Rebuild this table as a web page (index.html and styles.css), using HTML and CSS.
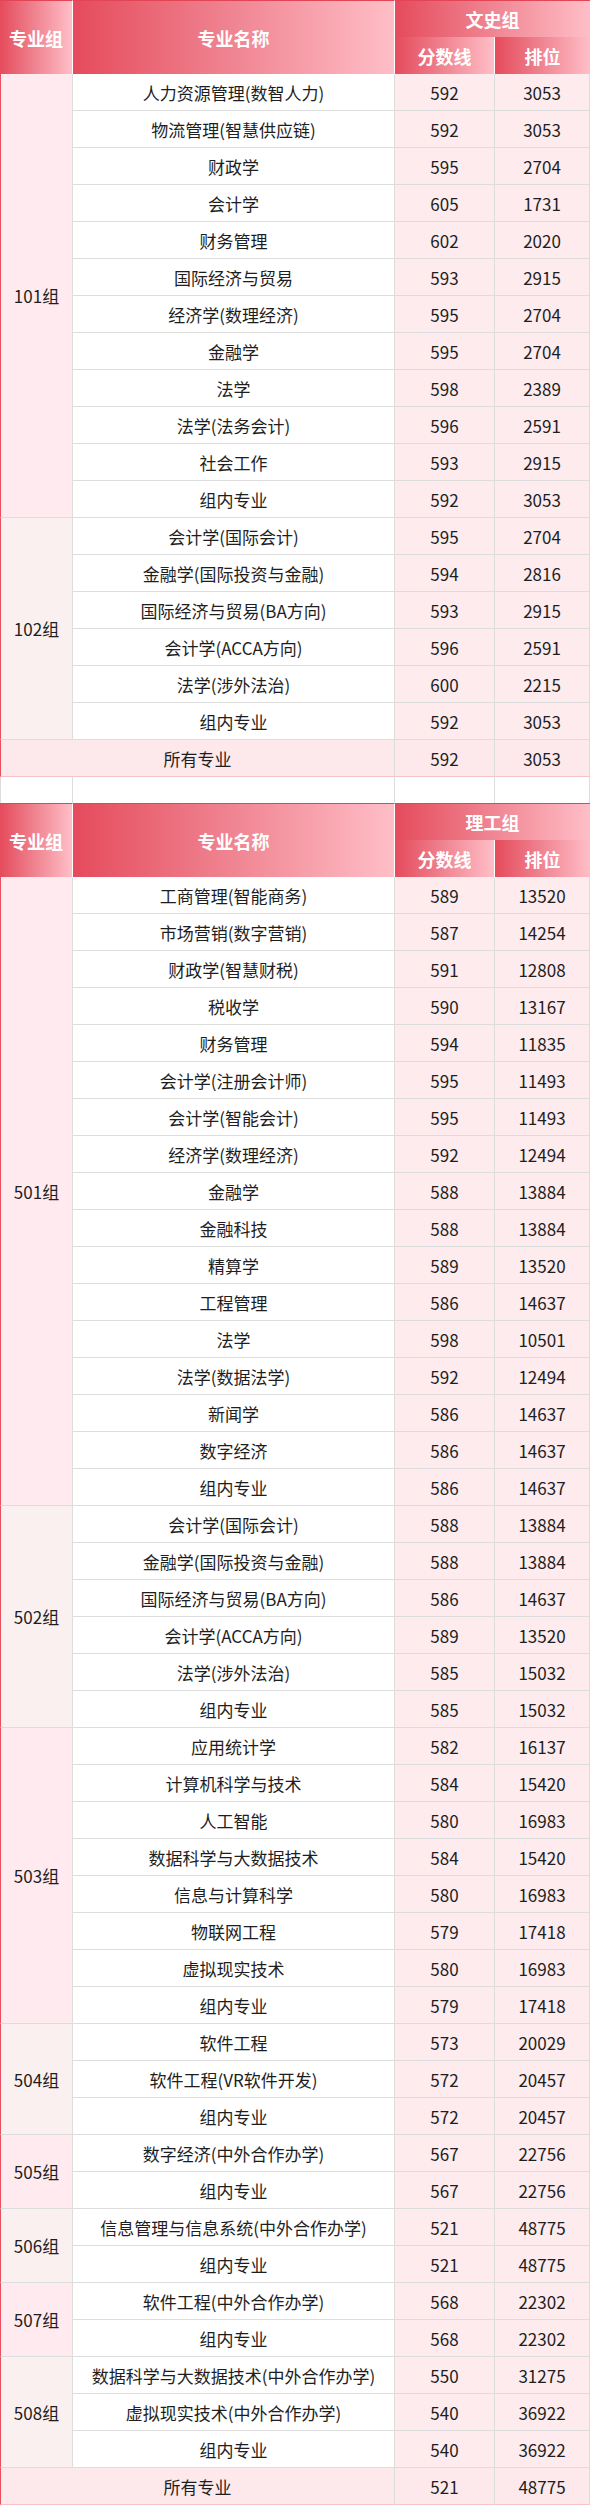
FILE: index.html
```html
<!DOCTYPE html>
<html lang="zh-CN">
<head>
<meta charset="utf-8">
<title>录取分数线</title>
<link rel="stylesheet" href="styles.css">
</head>
<body>
<table class="score-table">
  <colgroup>
    <col class="c-group">
    <col class="c-name">
    <col class="c-score">
    <col class="c-rank">
  </colgroup>
  <tbody>
    <tr class="head-row">
      <th rowspan="2" class="h-group">专业组</th>
      <th rowspan="2" class="h-name">专业名称</th>
      <th colspan="2" class="h-cat">文史组</th>
    </tr>
    <tr class="head-row">
      <th class="h-score">分数线</th>
      <th class="h-rank">排位</th>
    </tr>

    <tr><td rowspan="12" class="grp odd">101组</td><td class="name">人力资源管理(数智人力)</td><td class="num">592</td><td class="num rk">3053</td></tr>
    <tr><td class="name">物流管理(智慧供应链)</td><td class="num">592</td><td class="num rk">3053</td></tr>
    <tr><td class="name">财政学</td><td class="num">595</td><td class="num rk">2704</td></tr>
    <tr><td class="name">会计学</td><td class="num">605</td><td class="num rk">1731</td></tr>
    <tr><td class="name">财务管理</td><td class="num">602</td><td class="num rk">2020</td></tr>
    <tr><td class="name">国际经济与贸易</td><td class="num">593</td><td class="num rk">2915</td></tr>
    <tr><td class="name">经济学(数理经济)</td><td class="num">595</td><td class="num rk">2704</td></tr>
    <tr><td class="name">金融学</td><td class="num">595</td><td class="num rk">2704</td></tr>
    <tr><td class="name">法学</td><td class="num">598</td><td class="num rk">2389</td></tr>
    <tr><td class="name">法学(法务会计)</td><td class="num">596</td><td class="num rk">2591</td></tr>
    <tr><td class="name">社会工作</td><td class="num">593</td><td class="num rk">2915</td></tr>
    <tr><td class="name">组内专业</td><td class="num">592</td><td class="num rk">3053</td></tr>

    <tr><td rowspan="6" class="grp even">102组</td><td class="name">会计学(国际会计)</td><td class="num">595</td><td class="num rk">2704</td></tr>
    <tr><td class="name">金融学(国际投资与金融)</td><td class="num">594</td><td class="num rk">2816</td></tr>
    <tr><td class="name">国际经济与贸易(BA方向)</td><td class="num">593</td><td class="num rk">2915</td></tr>
    <tr><td class="name">会计学(ACCA方向)</td><td class="num">596</td><td class="num rk">2591</td></tr>
    <tr><td class="name">法学(涉外法治)</td><td class="num">600</td><td class="num rk">2215</td></tr>
    <tr><td class="name">组内专业</td><td class="num">592</td><td class="num rk">3053</td></tr>

    <tr class="total"><td colspan="2" class="total-label">所有专业</td><td class="num">592</td><td class="num rk">3053</td></tr>

    <tr class="spacer"><td class="sp-first"></td><td></td><td></td><td class="rk"></td></tr>

    <tr class="head-row">
      <th rowspan="2" class="h-group">专业组</th>
      <th rowspan="2" class="h-name">专业名称</th>
      <th colspan="2" class="h-cat">理工组</th>
    </tr>
    <tr class="head-row">
      <th class="h-score">分数线</th>
      <th class="h-rank">排位</th>
    </tr>

    <tr><td rowspan="17" class="grp odd">501组</td><td class="name">工商管理(智能商务)</td><td class="num">589</td><td class="num rk">13520</td></tr>
    <tr><td class="name">市场营销(数字营销)</td><td class="num">587</td><td class="num rk">14254</td></tr>
    <tr><td class="name">财政学(智慧财税)</td><td class="num">591</td><td class="num rk">12808</td></tr>
    <tr><td class="name">税收学</td><td class="num">590</td><td class="num rk">13167</td></tr>
    <tr><td class="name">财务管理</td><td class="num">594</td><td class="num rk">11835</td></tr>
    <tr><td class="name">会计学(注册会计师)</td><td class="num">595</td><td class="num rk">11493</td></tr>
    <tr><td class="name">会计学(智能会计)</td><td class="num">595</td><td class="num rk">11493</td></tr>
    <tr><td class="name">经济学(数理经济)</td><td class="num">592</td><td class="num rk">12494</td></tr>
    <tr><td class="name">金融学</td><td class="num">588</td><td class="num rk">13884</td></tr>
    <tr><td class="name">金融科技</td><td class="num">588</td><td class="num rk">13884</td></tr>
    <tr><td class="name">精算学</td><td class="num">589</td><td class="num rk">13520</td></tr>
    <tr><td class="name">工程管理</td><td class="num">586</td><td class="num rk">14637</td></tr>
    <tr><td class="name">法学</td><td class="num">598</td><td class="num rk">10501</td></tr>
    <tr><td class="name">法学(数据法学)</td><td class="num">592</td><td class="num rk">12494</td></tr>
    <tr><td class="name">新闻学</td><td class="num">586</td><td class="num rk">14637</td></tr>
    <tr><td class="name">数字经济</td><td class="num">586</td><td class="num rk">14637</td></tr>
    <tr><td class="name">组内专业</td><td class="num">586</td><td class="num rk">14637</td></tr>

    <tr><td rowspan="6" class="grp even">502组</td><td class="name">会计学(国际会计)</td><td class="num">588</td><td class="num rk">13884</td></tr>
    <tr><td class="name">金融学(国际投资与金融)</td><td class="num">588</td><td class="num rk">13884</td></tr>
    <tr><td class="name">国际经济与贸易(BA方向)</td><td class="num">586</td><td class="num rk">14637</td></tr>
    <tr><td class="name">会计学(ACCA方向)</td><td class="num">589</td><td class="num rk">13520</td></tr>
    <tr><td class="name">法学(涉外法治)</td><td class="num">585</td><td class="num rk">15032</td></tr>
    <tr><td class="name">组内专业</td><td class="num">585</td><td class="num rk">15032</td></tr>

    <tr><td rowspan="8" class="grp odd">503组</td><td class="name">应用统计学</td><td class="num">582</td><td class="num rk">16137</td></tr>
    <tr><td class="name">计算机科学与技术</td><td class="num">584</td><td class="num rk">15420</td></tr>
    <tr><td class="name">人工智能</td><td class="num">580</td><td class="num rk">16983</td></tr>
    <tr><td class="name">数据科学与大数据技术</td><td class="num">584</td><td class="num rk">15420</td></tr>
    <tr><td class="name">信息与计算科学</td><td class="num">580</td><td class="num rk">16983</td></tr>
    <tr><td class="name">物联网工程</td><td class="num">579</td><td class="num rk">17418</td></tr>
    <tr><td class="name">虚拟现实技术</td><td class="num">580</td><td class="num rk">16983</td></tr>
    <tr><td class="name">组内专业</td><td class="num">579</td><td class="num rk">17418</td></tr>

    <tr><td rowspan="3" class="grp even">504组</td><td class="name">软件工程</td><td class="num">573</td><td class="num rk">20029</td></tr>
    <tr><td class="name">软件工程(VR软件开发)</td><td class="num">572</td><td class="num rk">20457</td></tr>
    <tr><td class="name">组内专业</td><td class="num">572</td><td class="num rk">20457</td></tr>

    <tr><td rowspan="2" class="grp odd">505组</td><td class="name">数字经济(中外合作办学)</td><td class="num">567</td><td class="num rk">22756</td></tr>
    <tr><td class="name">组内专业</td><td class="num">567</td><td class="num rk">22756</td></tr>

    <tr><td rowspan="2" class="grp even">506组</td><td class="name">信息管理与信息系统(中外合作办学)</td><td class="num">521</td><td class="num rk">48775</td></tr>
    <tr><td class="name">组内专业</td><td class="num">521</td><td class="num rk">48775</td></tr>

    <tr><td rowspan="2" class="grp odd">507组</td><td class="name">软件工程(中外合作办学)</td><td class="num">568</td><td class="num rk">22302</td></tr>
    <tr><td class="name">组内专业</td><td class="num">568</td><td class="num rk">22302</td></tr>

    <tr><td rowspan="3" class="grp even">508组</td><td class="name">数据科学与大数据技术(中外合作办学)</td><td class="num">550</td><td class="num rk">31275</td></tr>
    <tr><td class="name">虚拟现实技术(中外合作办学)</td><td class="num">540</td><td class="num rk">36922</td></tr>
    <tr><td class="name">组内专业</td><td class="num">540</td><td class="num rk">36922</td></tr>

    <tr class="total"><td colspan="2" class="total-label">所有专业</td><td class="num">521</td><td class="num rk">48775</td></tr>
  </tbody>
</table>
</body>
</html>
```

FILE: styles.css
```css
html, body {
  margin: 0;
  padding: 0;
  background: #ffffff;
}

body {
  font-family: "Noto Sans CJK SC", "Noto Sans", sans-serif;
  color: #1e1e1e;
}

.score-table {
  width: 590px;
  table-layout: fixed;
  border-collapse: separate;
  border-spacing: 0;
}

.c-group { width: 73px; }
.c-name { width: 322px; }
.c-score { width: 100px; }
.c-rank { width: 95px; }

.score-table th,
.score-table td {
  box-sizing: border-box;
  padding: 0;
  text-align: center;
  vertical-align: middle;
  height: 37px;
}

/* header */
.head-row th {
  color: #ffffff;
  font-weight: 700;
  font-size: 18px;
  background: linear-gradient(to right, #e54b5c 0%, #f08592 50%, #ffbec7 100%);
}

.h-group,
.h-name {
  border-top: 1px solid #e14556;
  border-right: 1px solid #ffffff;
}

.h-cat {
  border-top: 1px solid #e14556;
}

.h-score {
  border-right: 1px solid #ffffff;
}

/* body cells */
.score-table td {
  font-size: 17px;
  border-bottom: 1px solid #dddddd;
  border-right: 1px solid #dddddd;
  background: #ffffff;
}

.score-table td.num {
  background: #fdebee;
}

.score-table td.grp {
  border-left: 1px solid #e8505f;
}

.score-table td.grp.odd {
  background: #ffebef;
}

.score-table td.grp.even {
  background: #fbf0f0;
}

.total td {
  background: #fde9ec;
  border-bottom-color: #f7c2ca;
}

.score-table .total td.total-label {
  border-left: 1px solid #e8505f;
  background: #fde9ec;
}

.score-table .total td.num {
  background: #fde9ec;
}

.spacer td {
  height: 26px;
  background: #ffffff;
  border-bottom: none;
}

.spacer td.sp-first {
  border-left: 1px solid #dddddd;
}
```
